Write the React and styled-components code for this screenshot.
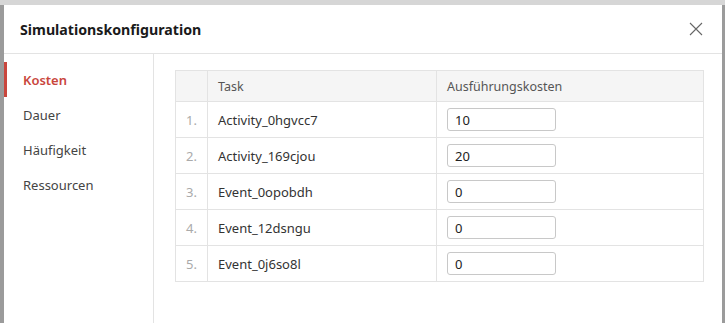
import React from 'react';
import styled, { createGlobalStyle } from 'styled-components';

const GlobalStyle = createGlobalStyle`
  html, body {
    margin: 0;
    padding: 0;
    background: #9b9b9b;
    overflow: hidden;
  }
  body {
    font-family: 'Noto Sans', 'Open Sans', sans-serif;
  }
`;

const Backdrop = styled.div`
  height: 323px;
  padding: 5px 3px 0 4px;
  box-sizing: border-box;
  background: linear-gradient(#d6d6d6 0 5px, #9b9b9b 5px);
`;

const Modal = styled.div`
  background: #fff;
  height: 330px;
  display: flex;
  flex-direction: column;
`;

const Header = styled.header`
  height: 48px;
  display: flex;
  align-items: center;
  justify-content: space-between;
  padding: 0 19px 0 16px;
  border-bottom: 1px solid #e3e3e3;
  h1 {
    margin: 0;
    font-size: 14.2px;
    font-weight: 700;
    color: #1a1a1a;
  }
`;

const CloseBtn = styled.button`
  border: 0;
  background: none;
  padding: 0;
  width: 14px;
  height: 14px;
  display: flex;
  cursor: pointer;
`;

const Body = styled.div`
  flex: 1;
  display: flex;
`;

const Sidebar = styled.nav`
  width: 149px;
  border-right: 1px solid #e3e3e3;
  padding-top: 8px;
`;

const MenuItem = styled.div`
  height: 35px;
  display: flex;
  align-items: center;
  padding-left: 16px;
  font-size: 13px;
  border-left: 3px solid ${p => (p.active ? '#c9463d' : 'transparent')};
  color: ${p => (p.active ? '#c9463d' : '#444')};
  font-weight: ${p => (p.active ? 600 : 400)};
`;

const Content = styled.section`
  flex: 1;
  padding: 16px 18px 0 21px;
`;

const Table = styled.table`
  width: 100%;
  border-collapse: collapse;
  font-size: 13px;
  th, td {
    border: 1px solid #e3e3e3;
    text-align: left;
    padding: 0 10px;
  }
  th {
    height: 30px;
    background: #f5f5f5;
    color: #555;
    font-weight: 400;
    font-size: 12.5px;
  }
  td {
    height: 35px;
    color: #333;
  }
`;

const IndexCell = styled.td`
  width: 11px;
  && {
    color: #aaa;
  }
`;

const TaskCol = styled.th`
  width: 208px;
`;

const BlankCol = styled.th`
  width: 11px;
`;

const CostInput = styled.input`
  width: 109px;
  height: 23px;
  box-sizing: border-box;
  border: 1px solid #c8c8c8;
  border-radius: 3px;
  padding: 0 7px;
  font-family: inherit;
  font-size: 13px;
  color: #222;
`;

const rows = [
  { task: 'Activity_0hgvcc7', cost: '10' },
  { task: 'Activity_169cjou', cost: '20' },
  { task: 'Event_0opobdh', cost: '0' },
  { task: 'Event_12dsngu', cost: '0' },
  { task: 'Event_0j6so8l', cost: '0' },
];

const menu = ['Kosten', 'Dauer', 'Häufigkeit', 'Ressourcen'];

export default function App() {
  return (
    <>
      <GlobalStyle />
      <Backdrop>
        <Modal>
          <Header>
            <h1>Simulationskonfiguration</h1>
            <CloseBtn aria-label="close">
              <svg width="14" height="14" viewBox="0 0 14 14">
                <path d="M1 1L13 13M13 1L1 13" stroke="#666" strokeWidth="1.1" />
              </svg>
            </CloseBtn>
          </Header>
          <Body>
            <Sidebar>
              {menu.map((m, i) => (
                <MenuItem key={m} active={i === 0}>{m}</MenuItem>
              ))}
            </Sidebar>
            <Content>
              <Table>
                <thead>
                  <tr>
                    <BlankCol />
                    <TaskCol>Task</TaskCol>
                    <th>Ausführungskosten</th>
                  </tr>
                </thead>
                <tbody>
                  {rows.map((r, i) => (
                    <tr key={r.task}>
                      <IndexCell>{i + 1}.</IndexCell>
                      <td>{r.task}</td>
                      <td><CostInput defaultValue={r.cost} /></td>
                    </tr>
                  ))}
                </tbody>
              </Table>
            </Content>
          </Body>
        </Modal>
      </Backdrop>
    </>
  );
}
